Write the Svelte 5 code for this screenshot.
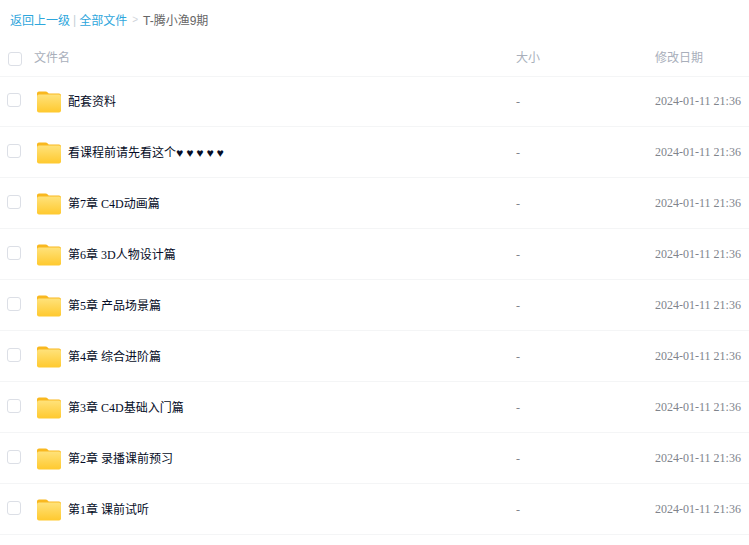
<script>
  const files = [
    "配套资料",
    "看课程前请先看这个♥ ♥ ♥ ♥ ♥",
    "第7章 C4D动画篇",
    "第6章 3D人物设计篇",
    "第5章 产品场景篇",
    "第4章 综合进阶篇",
    "第3章 C4D基础入门篇",
    "第2章 录播课前预习",
    "第1章 课前试听"
  ];
</script>

<div class="page">
  <div class="crumbs">
    <span class="link">返回上一级</span>
    <span class="bar">|</span>
    <span class="link">全部文件</span>
    <span class="gt">&gt;</span>
    <span class="cur">T-腾小渔9期</span>
  </div>

  <div class="row head">
    <span class="check"></span>
    <span class="name">文件名</span>
    <span class="size">大小</span>
    <span class="date">修改日期</span>
  </div>

  <div class="list">
    {#each files as f}
      <div class="row">
        <span class="check"></span>
        <svg class="folder" viewBox="0 0 24 22" width="24" height="22">
          <defs>
            <linearGradient id="fg" x1="0" y1="0" x2="0" y2="1">
              <stop offset="0" stop-color="#ffe27a" />
              <stop offset="1" stop-color="#ffc92e" />
            </linearGradient>
          </defs>
          <path d="M2 0.5h6.5c1 0 1.600.4 2.200 1l1 1H22c1.100 0 2 .9 2 2V8H0V2.500c0-1.100.9-2 2-2z" fill="#f9b81f" />
          <rect x="0" y="3.500" width="24" height="18" rx="2" fill="url(#fg)" />
        </svg>
        <span class="name">{f}</span>
        <span class="size">-</span>
        <span class="date">2024-01-11 21:36</span>
      </div>
    {/each}
  </div>
</div>

<style>
  :global(body) {
    margin: 0;
    background: #fff;
  }
  .page {
    width: 749px;
    height: 545px;
    overflow: hidden;
    font-family: "Liberation Serif", "Noto Sans CJK SC", serif;
    font-size: 12px;
  }
  .crumbs {
    height: 39px;
    display: flex;
    align-items: center;
    padding-left: 10px;
    font-family: "Liberation Sans", "Noto Sans CJK SC", sans-serif;
    color: #666;
  }
  .link { color: #2ea6dc; }
  .bar { color: #c5d0d8; margin: 0 3px 0 3px; }
  .gt { color: #d0d4da; font-size: 10px; margin: 0 5px 0 5px; }
  .list { margin-top: -1px; }
  .row {
    height: 50px;
    display: flex;
    align-items: center;
    border-bottom: 1px solid #f4f5f6;
  }
  .head {
    height: 37px;
    color: #a9afbb;
  }
  .check {
    box-sizing: border-box;
    width: 14px;
    height: 14px;
    border: 1px solid #dcdfe6;
    border-radius: 3px;
    margin-left: 7px;
    margin-bottom: 2px;
    flex: none;
  }
  .head .check { margin-left: 8px; margin-bottom: 0; margin-top: 2px; }
  .folder { margin-left: 16px; margin-top: 1px; flex: none; }
  .name {
    margin-left: 7px;
    width: 448px;
    flex: none;
    color: #050c26;
    margin-bottom: 1px;
  }
  .head .name { margin-left: 12px; width: 482px; color: #a9afbb; margin-bottom: 1px; }
  .size { width: 139px; flex: none; color: #80848c; margin-top: 3px; }
  .date { color: #80848c; white-space: nowrap; margin-top: 1px; }
  .head .size, .head .date { color: #a9afbb; margin-top: 0; margin-bottom: 1px; }
</style>
